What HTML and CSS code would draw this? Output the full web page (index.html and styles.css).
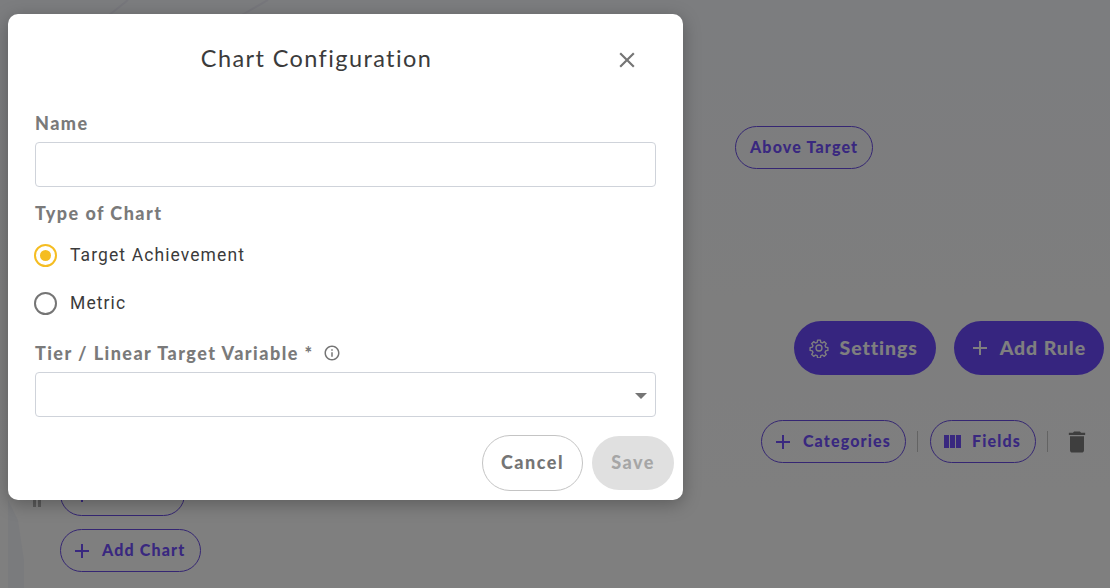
FILE: index.html
```html
<!DOCTYPE html>
<html lang="en">
<head>
<meta charset="utf-8">
<title>Chart Configuration</title>
<link rel="stylesheet" href="styles.css">
</head>
<body>
<div class="page">
  <svg class="decor" viewBox="0 0 1110 588" fill="none">
    <path d="M108 16 128 0M240 16 268 0" stroke="#eeeef8" stroke-width="2"/>
    <path d="M8 500 18 520 24 560V588H8z" fill="#f5f6fb"/>
  </svg>
  <main class="behind">
    <div class="target-row"><button class="chip">Above Target</button></div>
    <div class="action-row">
      <button class="solid">
        <svg class="ico-gear" viewBox="0 0 24 24" fill="none" stroke="currentColor" stroke-width="1.6" stroke-linejoin="round"><path d="M10.300 2.500h3.400l.5 2.700 1.900.8 2.300-1.600 2.400 2.400-1.600 2.300.8 1.900 2.700.5v3.400l-2.700.5-.8 1.900 1.600 2.300-2.400 2.400-2.300-1.600-1.900.8-.5 2.700h-3.400l-.5-2.700-1.900-.8-2.300 1.600-2.400-2.400 1.600-2.300-.8-1.900-2.700-.5v-3.400l2.700-.5.8-1.900-1.600-2.300 2.400-2.400 2.300 1.600 1.900-.8z"/><circle cx="12" cy="12" r="3.600"/></svg>
        Settings
      </button>
      <button class="solid add-rule">
        <svg class="ico-plus" viewBox="0 0 24 24" fill="currentColor"><path d="M19 13h-6v6h-2v-6H5v-2h6V5h2v6h6z"/></svg>
        Add Rule
      </button>
    </div>
    <div class="tool-row">
      <button class="chip icon-chip">
        <svg class="ico-plus" viewBox="0 0 24 24" fill="currentColor"><path d="M19 13h-6v6h-2v-6H5v-2h6V5h2v6h6z"/></svg>
        Categories
      </button>
      <span class="sep"></span>
      <button class="chip icon-chip">
        <svg class="ico-cols" viewBox="0 0 24 24" fill="currentColor"><path d="M10 18h5V5h-5v13zm-6 0h5V5H4v13zM16 5v13h5V5h-5z"/></svg>
        Fields
      </button>
      <span class="sep"></span>
      <svg class="ico-trash" viewBox="0 0 24 24" fill="currentColor"><path d="M6 19c0 1.100.9 2 2 2h8c1.100 0 2-.9 2-2V7H6v12zM19 4h-3.500l-1-1h-5l-1 1H5v2h14V4z"/></svg>
    </div>
    <div class="chart-col">
      <div class="hidden-row">
        <span class="grip"></span>
        <button class="chip icon-chip wide-chip">
          <svg class="ico-plus" viewBox="0 0 24 24" fill="currentColor"><path d="M19 13h-6v6h-2v-6H5v-2h6V5h2v6h6z"/></svg>
        </button>
      </div>
      <button class="chip icon-chip add-chart">
        <svg class="ico-plus" viewBox="0 0 24 24" fill="currentColor"><path d="M19 13h-6v6h-2v-6H5v-2h6V5h2v6h6z"/></svg>
        Add Chart
      </button>
    </div>
  </main>

  <div class="scrim"></div>

  <section class="dialog" role="dialog" aria-label="Chart Configuration">
    <header class="dialog-head">
      <h2 class="dialog-title">Chart Configuration</h2>
      <button class="close" aria-label="Close">
        <svg viewBox="0 0 24 24" fill="currentColor"><path d="M19 6.410 17.590 5 12 10.590 6.410 5 5 6.410 10.590 12 5 17.590 6.410 19 12 13.410 17.590 19 19 17.590 13.410 12z"/></svg>
      </button>
    </header>
    <div class="dialog-body">
      <label class="field-label">Name</label>
      <div class="input"></div>
      <div class="field-label type-label">Type of Chart</div>
      <div class="radio-row first">
        <span class="radio on"></span>
        <span class="radio-text">Target Achievement</span>
      </div>
      <div class="radio-row">
        <span class="radio"></span>
        <span class="radio-text">Metric</span>
      </div>
      <div class="field-label tier-label">
        Tier / Linear Target Variable *
        <svg class="ico-info" viewBox="0 0 24 24" fill="currentColor"><path d="M11 7h2v2h-2zm0 4h2v6h-2zm1-9C6.480 2 2 6.480 2 12s4.480 10 10 10 10-4.480 10-10S17.520 2 12 2zm0 18c-4.410 0-8-3.590-8-8s3.590-8 8-8 8 3.590 8 8-3.590 8-8 8z"/></svg>
      </div>
      <div class="input select"><span class="caret"></span></div>
    </div>
    <footer class="dialog-foot">
      <button class="btn-cancel">Cancel</button>
      <button class="btn-save" disabled>Save</button>
    </footer>
  </section>
</div>
</body>
</html>
```

FILE: styles.css
```css
* { box-sizing: border-box; }
html, body { margin: 0; padding: 0; }
body { width: 1110px; height: 588px; overflow: hidden; font-family: Lato, "Open Sans", sans-serif; }
button { font-family: inherit; cursor: pointer; }

.page { position: relative; width: 1110px; height: 588px; overflow: hidden; background: linear-gradient(#f8fafe 0, #fcfcfd 300px, #ffffff 100%); }
.decor { position: absolute; left: 0; top: 0; width: 1110px; height: 588px; }

.behind { position: relative; display: flex; flex-direction: column; height: 588px; padding-top: 126px; }
.target-row { display: flex; padding-left: 735px; }
.action-row { display: flex; justify-content: flex-end; gap: 18px; padding-right: 6px; margin-top: 152px; }
.tool-row { display: flex; align-items: center; justify-content: flex-end; margin-top: 45px; padding-right: 19px; }
.chart-col { display: flex; flex-direction: column; gap: 13px; padding-left: 60px; margin-top: 10px; }
.hidden-row { position: relative; display: flex; }
.grip { position: absolute; left: -27px; top: 25px; width: 8px; height: 9px; border-left: 3px solid #b5b5b5; border-right: 3px solid #b5b5b5; }

.chip { display: inline-flex; align-items: center; height: 43px; padding: 0 14px 3px; border: 1px solid #6b4de6; border-radius: 22px; background: transparent; color: #7350ff; font-size: 16px; font-weight: 900; letter-spacing: 1.150px; white-space: nowrap; }
.icon-chip { padding: 0 14px 2px 9px; }
.icon-chip svg { margin-right: 8px; margin-bottom: -2px; }
.wide-chip { width: 125px; }
.add-chart { align-self: flex-start; width: 141px; }
.ico-plus { width: 24px; height: 24px; flex: none; }
.ico-cols { width: 24px; height: 24px; flex: none; }
.sep { width: 1px; height: 21px; margin: 0 12px 0 11px; background: #c6c6c6; }
.ico-trash { width: 28px; height: 28px; margin-left: 3px; color: #7c7c7c; }

.solid { display: inline-flex; align-items: center; height: 54px; padding: 0 18px 2px 15px; border: 0; border-radius: 27px; background: #6c4bff; color: #fff; font-size: 19.500px; font-weight: 900; letter-spacing: .9px; white-space: nowrap; }
.solid svg { margin-right: 11px; margin-bottom: -2px; }
.ico-gear { width: 20px; height: 20px; }
.add-rule { padding: 0 18px 2px 14px; }
.solid .ico-plus { margin-right: 8px; }

.scrim { position: absolute; inset: 0; background: rgba(0, 0, 0, .5); }

.dialog { position: absolute; left: 8px; top: 14px; width: 675px; height: 486px; display: flex; flex-direction: column; border-radius: 10px; background: #fff; box-shadow: 0 4px 18px rgba(0,0,0,.28); }
.dialog-head { position: relative; display: flex; justify-content: center; height: 99px; padding: 28px 58px 0 0; }
.dialog-title { margin: 0; font-size: 23.500px; line-height: 32px; font-weight: 400; letter-spacing: 1.400px; color: #3b3b3b; }
.close { position: absolute; left: 606px; top: 33px; width: 26px; height: 26px; padding: 0; border: 0; background: none; color: #757575; }
.close svg { display: block; width: 26px; height: 26px; }

.dialog-body { display: flex; flex-direction: column; padding: 0 27px; }
.field-label { display: flex; align-items: center; height: 22px; padding-bottom: 2px; font-size: 18px; font-weight: 900; letter-spacing: 1.450px; color: #7a7a7a; white-space: nowrap; }
.input { width: 621px; height: 45px; margin-top: 7px; border: 1px solid #cfd3da; border-radius: 4px; background: #fff; }
.type-label { margin-top: 16px; }
.radio-row { display: flex; align-items: center; height: 48px; }
.radio-row.first { margin-top: 6px; }
.radio { position: relative; width: 23px; height: 23px; margin: 0 13px 0 -1px; border: 2px solid #757575; border-radius: 50%; }
.radio.on { border-color: #f5bd22; }
.radio.on::after { content: ""; position: absolute; left: 4px; top: 4px; width: 11px; height: 11px; border-radius: 50%; background: #f5bd22; }
.radio-text { font-family: Roboto, sans-serif; font-size: 17.500px; letter-spacing: 1.100px; color: #3b3b3b; }
.tier-label { margin-top: 16px; }
.ico-info { width: 18px; height: 18px; margin-left: 9px; color: #757575; }
.select { position: relative; margin-top: 7px; }
.caret { position: absolute; right: 8px; top: 20px; border: 6px solid transparent; border-top: 6px solid #757575; border-bottom: 0; }

.dialog-foot { display: flex; justify-content: flex-end; gap: 9px; padding: 18px 9px 0 0; }
.btn-cancel { height: 56px; width: 101px; border: 1px solid #c4c4c4; border-radius: 28px; background: #fff; color: #757575; font-size: 18px; font-weight: 900; letter-spacing: 1.500px; padding: 0 0 2px; }
.btn-save { height: 54px; width: 82px; margin-top: 1px; border: 0; border-radius: 27px; background: #e0e0e0; color: #a6a6a6; font-size: 18px; font-weight: 900; letter-spacing: 1.500px; padding: 0 0 2px; }
```
